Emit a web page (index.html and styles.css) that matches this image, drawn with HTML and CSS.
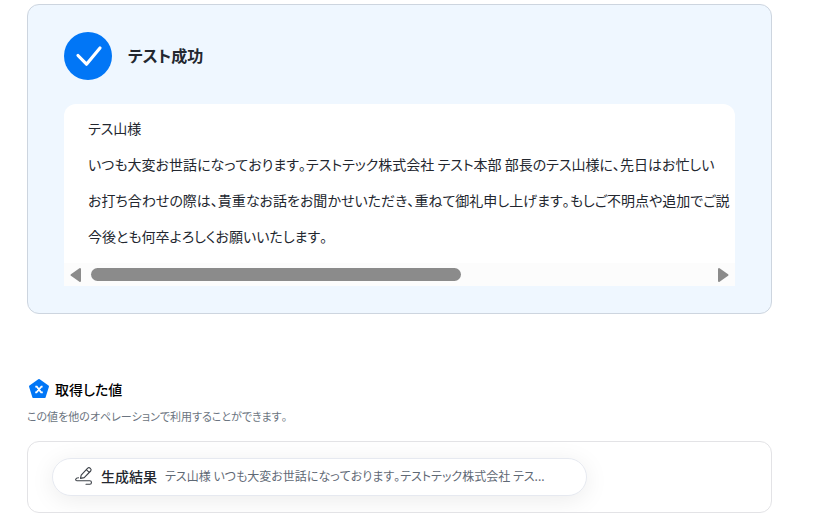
FILE: index.html
```html
<!DOCTYPE html>
<html lang="ja">
<head>
  <meta charset="UTF-8">
  <title>テスト成功</title>
  <link rel="stylesheet" href="styles.css">
</head>
<body>

<section class="result">
  <div class="result-head">
    <svg class="result-icon" viewBox="0 0 48 48" aria-hidden="true">
      <circle cx="24" cy="24" r="24" fill="#0176f6"/>
      <path d="M14 23.5l8.5 8.700L36 16" fill="none" stroke="#fff" stroke-width="3.2" stroke-linecap="round" stroke-linejoin="round"/>
    </svg>
    <h1>テスト成功</h1>
  </div>

  <div class="output">
    <div class="output-text">
      <p>テス山様</p>
      <p>いつも大変お世話になっております。テストテック株式会社 テスト本部 部長のテス山様に、先日はお忙しい</p>
      <p>お打ち合わせの際は、貴重なお話をお聞かせいただき、重ねて御礼申し上げます。もしご不明点や追加でご説</p>
      <p>今後とも何卒よろしくお願いいたします。</p>
    </div>
    <div class="scrollbar">
      <button type="button" class="scroll-arrow" aria-label="左へスクロール">
        <svg viewBox="0 0 12 16" aria-hidden="true"><path d="M10 2v12L1.500 8z" fill="#8b8b8b" stroke="#8b8b8b" stroke-width="2" stroke-linejoin="round"/></svg>
      </button>
      <div class="scroll-track"><div class="scroll-thumb"></div></div>
      <button type="button" class="scroll-arrow" aria-label="右へスクロール">
        <svg viewBox="0 0 12 16" aria-hidden="true"><path d="M2 2v12L10.500 8z" fill="#8b8b8b" stroke="#8b8b8b" stroke-width="2" stroke-linejoin="round"/></svg>
      </button>
    </div>
  </div>
</section>

<section class="values">
  <h2>
    <svg class="values-icon" viewBox="0 0 24 24" aria-hidden="true">
      <path d="M12 3.200l8.800 6.300-3.300 10.300h-11L3.200 9.500z" fill="#0176f6" stroke="#0176f6" stroke-width="2.400" stroke-linejoin="round"/>
      <path d="M8.300 9.700h1.500l4.300 5.600h1.700M15.600 9.700h-1.200L9.500 15.300H8.200" fill="none" stroke="#fff" stroke-width="1.700"/>
    </svg>
    取得した値
  </h2>
  <p class="values-note">この値を他のオペレーションで利用することができます。</p>

  <div class="values-box">
    <button type="button" class="value-pill">
      <svg class="pen-icon" viewBox="0 0 18 18" fill="none" stroke="#3c4148" stroke-width="1.100" stroke-linecap="round" stroke-linejoin="round" aria-hidden="true">
        <path d="M6.200 8.100l6.500-7q1.300-1 2.700.2t.3 2.700L9.200 10.600l-3.700.8zM11.300 2.700l2.900 2.700"/>
        <path d="M3.500 10.700C.3 10.900-.2 13.700 2 13.700h12.800c2.200 0 2.200 3.300 0 3.500H11"/>
      </svg>
      <span class="value-name">生成結果</span>
      <span class="value-text">テス山様 いつも大変お世話になっております。テストテック株式会社 テス...</span>
    </button>
  </div>
</section>

</body>
</html>
```
FILE: styles.css
```css
* {
  box-sizing: border-box;
}

body {
  margin: 0;
  padding: 4px 57px 0 27px;
  background: #fff;
  color: #23272f;
  font-family: "Noto Sans CJK JP", sans-serif;
  font-feature-settings: "palt";
  font-kerning: none;
}

h1, h2, p {
  margin: 0;
}

button {
  border: none;
  background: none;
  padding: 0;
  color: inherit;
  font: inherit;
  font-feature-settings: inherit;
  font-kerning: inherit;
  cursor: pointer;
}

.result {
  padding: 27px 36px;
  border: 1px solid #cdd5df;
  border-radius: 12px;
  background: #eff7ff;
}

.result-head {
  display: flex;
  align-items: center;
  gap: 16px;
  margin-bottom: 24px;
}

.result-icon {
  width: 48px;
  height: 48px;
}

h1 {
  padding-bottom: 2px;
  font-size: 16px;
  font-weight: 600;
  line-height: 24px;
}

.output {
  border-radius: 12px 12px 0 0;
  background: #fff;
  overflow: hidden;
}

.output-text {
  padding: 6px 0 9px 24px;
  overflow: hidden;
  font-size: 14px;
  line-height: 36px;
  white-space: nowrap;
}

.scrollbar {
  display: flex;
  align-items: center;
  gap: 9px;
  height: 23px;
  padding: 0 6px;
  background: #fcfcfc;
}

.scroll-arrow svg {
  display: block;
  width: 12px;
  height: 16px;
}

.scroll-track {
  flex: 1;
}

.scroll-thumb {
  width: 60%;
  height: 13px;
  border-radius: 7px;
  background: #8b8b8b;
}

.values {
  margin-top: 63px;
}

h2 {
  display: flex;
  align-items: center;
  gap: 4px;
  color: #000;
  font-size: 14px;
  font-weight: 500;
  line-height: 22px;
}

.values-icon {
  width: 24px;
  height: 24px;
}

.values-note {
  margin: 7px 0 16px;
  color: #6b7480;
  font-size: 11px;
  line-height: 17px;
}

.values-box {
  padding: 16px 24px;
  border: 1px solid #e3e3e6;
  border-radius: 12px;
  overflow: hidden;
}

.value-pill {
  display: flex;
  align-items: center;
  gap: 8px;
  width: 77%;
  height: 38px;
  padding: 0 26px 2px 22px;
  border: 1px solid #e6e9f0;
  border-radius: 19px;
  background: #fff;
  box-shadow: 0 4px 24px rgba(0, 0, 0, 0.08);
  line-height: 20px;
  white-space: nowrap;
}

.pen-icon {
  flex: none;
  width: 18px;
  height: 18px;
  overflow: visible;
}

.value-name {
  font-size: 14px;
  font-weight: 500;
}

.value-text {
  overflow: hidden;
  color: #5f6975;
  font-size: 12px;
  text-overflow: ellipsis;
}
```
